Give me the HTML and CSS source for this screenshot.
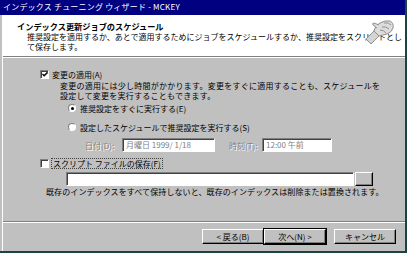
FILE: index.html
```html
<!DOCTYPE html>
<html lang="ja">
<head>
    <meta charset="UTF-8">
    <title>インデックス チューニング ウィザード</title>
    <link rel="stylesheet" href="styles.css">
</head>
<body>
<div class="window">
    <div class="titlebar">インデックス チューニング ウィザード - MCKEY</div>
    <div class="frame">
        <div class="header">
            <div class="header-title">インデックス更新ジョブのスケジュール</div>
            <div class="header-desc">推奨設定を適用するか、あとで適用するためにジョブをスケジュールするか、推奨設定をスクリプトとし<br>て保存します。</div>
            <!-- ウィザードのアイコン（文字の上に重なる） -->
            <svg class="header-icon" width="30" height="26" viewBox="0 0 30 26">
                <path d="M1 20 L6 25 L14 17 L9 12 Z" fill="#d4d4d4" stroke="#909090" stroke-width="1"/>
                <path d="M9 12 Q10 6 15 4 Q20 1 25 2 Q29 4 28 9 Q27 13 22 15 L14 17 Z" fill="#dcdcdc" stroke="#909090" stroke-width="1"/>
                <path d="M19 4 Q24 3 26 6 M17 8 Q21 7 24 10 M15 11 Q19 11 21 14" stroke="#909090" stroke-width="1" fill="none"/>
                <path d="M12 9 L8 6 Q7 4 9 4 L14 6" fill="#dcdcdc" stroke="#909090" stroke-width="1"/>
            </svg>
        </div>
        <div class="sep"></div>
        <div class="main">
            <div class="row">
                <span class="check checked"><svg width="7" height="7" viewBox="0 0 7 7"><path d="M0.5 3 L2.5 5 L6.5 1" stroke="#000" stroke-width="1.6" fill="none"/></svg></span>
                <span class="label">変更の適用(A)</span>
            </div>
            <div class="desc">変更の適用には少し時間がかかります。変更をすぐに適用することも、スケジュールを<br>設定して変更を実行することもできます。</div>
            <div class="row radio-row">
                <span class="radio on"></span>
                <span class="label">推奨設定をすぐに実行する(E)</span>
            </div>
            <div class="row radio-row second">
                <span class="radio"></span>
                <span class="label">設定したスケジュールで推奨設定を実行する(S)</span>
            </div>
            <div class="date-row">
                <span class="disabled date-label">日付(D):</span>
                <span class="field date-field">月曜日 1999/ 1/18</span>
                <span class="disabled time-label">時刻(T):</span>
                <span class="field time-field">12:00 午前</span>
            </div>
            <div class="row script-row">
                <span class="check"></span>
                <span class="label focus">スクリプト ファイルの保存(F)</span>
            </div>
            <div class="file-row">
                <span class="field file-field"></span>
                <span class="browse"></span>
            </div>
            <div class="note">既存のインデックスをすべて保持しないと、既存のインデックスは削除または置換されます。</div>
        </div>
        <div class="sep"></div>
        <div class="buttons">
            <button class="btn">&lt; 戻る(B)</button>
            <button class="btn default">次へ(N) &gt;</button>
            <button class="btn cancel">キャンセル</button>
        </div>
    </div>
</div>
</body>
</html>
```

FILE: styles.css
```css
*{
    margin:0;
    padding:0;
    box-sizing:border-box;
}
body{
    background:#1c4242;
    font-family:"Noto Sans CJK JP", "Noto Sans", sans-serif;
    font-size:8px;
    color:#000;
}
.window{
    width:405px;
    height:251px;
    background:#c0c0c0;
    display:flex;
    flex-direction:column;
}
.titlebar{
    height:15px;
    line-height:14px;
    background:#000080;
    color:#fff;
    padding-left:3px;
    font-size:8px;
    letter-spacing:0.2px;
}
.frame{
    flex:1;
    margin-left:2px;
    border-left:1px solid #fff;
    display:flex;
    flex-direction:column;
}
.header{
    height:41px;
    background:#fff;
    padding:6px 0 0 14px;
    white-space:nowrap;
    position:relative;
}
.header-title{
    font-weight:bold;
    font-size:8.2px;
    line-height:11px;
}
.header-desc{
    padding-left:10px;
    line-height:10px;
}
.header-icon{
    position:absolute;
    right:10px;
    top:4px;
}
.sep{
    border-top:1px solid #808080;
    border-bottom:1px solid #fff;
}
.main{
    height:163px;
    padding:10px 0 0 37px;
    white-space:nowrap;
}
.row{
    display:flex;
    align-items:center;
    height:12px;
}
.label{
    margin-left:3px;
}
.check{
    width:9px;
    height:9px;
    background:#fff;
    border-top:1px solid #808080;
    border-left:1px solid #808080;
    border-right:1px solid #fff;
    border-bottom:1px solid #fff;
    box-shadow:inset 1px 1px 0 #404040;
    display:flex;
    align-items:center;
    justify-content:center;
    padding:1px 0 0 1px;
}
.desc{
    margin-top:1px;
    padding-left:20px;
    line-height:10px;
    letter-spacing:0.25px;
}
.radio-row{
    margin-top:1px;
    padding-left:28px;
}
.radio-row.second{
    margin-top:7px;
}
.radio{
    width:8px;
    height:8px;
    border-radius:50%;
    background:#fff;
    border:1px solid #808080;
    border-right-color:#fff;
    border-bottom-color:#fff;
    position:relative;
}
.radio.on::after{
    content:"";
    position:absolute;
    left:1.5px;
    top:1.5px;
    width:3px;
    height:3px;
    border-radius:50%;
    background:#000;
}
.radio-row .label{
    margin-left:4px;
}
.date-row{
    margin-top:5px;
    display:flex;
    align-items:center;
    height:14px;
    padding-left:45px;
}
.disabled{
    color:#808080;
    text-shadow:1px 1px 0 #fff;
}
.field{
    height:14px;
    background:#fff;
    border-top:1px solid #808080;
    border-left:1px solid #808080;
    border-right:1px solid #fff;
    border-bottom:1px solid #fff;
    box-shadow:inset 1px 1px 0 #404040;
    color:#808080;
    line-height:12px;
    padding-left:3px;
}
.date-label{
    width:37px;
}
.date-field{
    width:93px;
}
.time-label{
    margin-left:14px;
    width:33px;
}
.time-field{
    width:70px;
}
.script-row{
    margin-top:5px;
}
.focus{
    border:1px dotted #404040;
    line-height:9px;
    padding:0 1px;
    margin-left:2px;
}
.file-row{
    margin-top:3px;
    display:flex;
    padding-left:26px;
    height:14px;
}
.file-field{
    width:288px;
}
.browse{
    width:18px;
    height:14px;
    margin-left:1px;
    border-top:1px solid #fff;
    border-left:1px solid #fff;
    border-right:1px solid #000;
    border-bottom:1px solid #000;
    box-shadow:inset -1px -1px 0 #808080;
}
.note{
    line-height:10px;
    padding-left:6px;
    margin-top:1px;
    letter-spacing:0.1px;
}
.buttons{
    flex:1;
    display:flex;
    justify-content:flex-end;
    padding:6px 9px 0 0;
}
.btn{
    width:62px;
    height:15px;
    font-family:inherit;
    font-size:8px;
    background:#c0c0c0;
    border-top:1px solid #fff;
    border-left:1px solid #fff;
    border-right:1px solid #000;
    border-bottom:1px solid #000;
    box-shadow:inset -1px -1px 0 #808080;
    line-height:12px;
}
.btn.default{
    outline:1px solid #000;
    outline-offset:0;
}
.btn.cancel{
    margin-left:8px;
}
```
